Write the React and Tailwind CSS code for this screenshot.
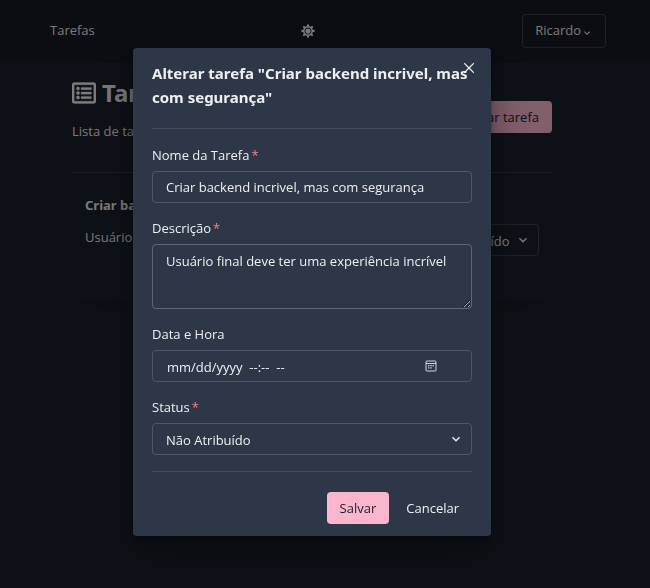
import { FaRegListAlt, FaSun } from "react-icons/fa";
import { MdKeyboardArrowDown } from "react-icons/md";

const fieldClass =
  "block h-8 w-full rounded border border-white/16 bg-transparent px-[13px] text-[13px] leading-5 text-white/92 outline-none";

function Field({ id, label, required, children }) {
  return (
    <div>
      <label htmlFor={id} className="mb-[6px] block leading-5">
        {label}
        {required && <span className="ml-[2px] text-[#fc8181]">*</span>}
      </label>
      {children}
    </div>
  );
}

function StatusSelect({ id, ...rest }) {
  return (
    <div className="relative">
      <select id={id} defaultValue="none" className={fieldClass + " appearance-none pt-[2px] pr-7"} {...rest}>
        <option value="none">Não Atribuído</option>
      </select>
      <MdKeyboardArrowDown className="pointer-events-none absolute top-2 right-2 size-4" />
    </div>
  );
}

function DateTimeInput({ id }) {
  return (
    <div className="relative">
      <input
        id={id}
        placeholder="mm/dd/yyyy  --:--  --"
        className={fieldClass + " px-[14px] pt-[2px] placeholder:text-white/92"}
      />
      <button type="button" aria-label="Abrir calendário" className="absolute top-[10px] right-[35px]">
        <svg viewBox="0 0 12 12" className="size-3 opacity-85" fill="none" stroke="currentColor">
          <rect x="1" y="1" width="10" height="10" rx="1" strokeWidth="1" />
          <path d="M1 3.5h10" strokeWidth="1" />
          <path d="M3 5.7h1.4M5.3 5.7h1.4M7.6 5.7H9M3 7.8h1.4M5.3 7.8h1.4" strokeWidth="1.3" />
        </svg>
      </button>
    </div>
  );
}

function Navbar() {
  return (
    <nav className="flex h-[63px] items-center justify-between bg-[#171923] pr-11 pb-[2px] pl-[50px]">
      <a href="#tarefas">Tarefas</a>
      <button type="button" aria-label="Alternar tema" className="p-1">
        <FaSun className="size-[14px]" />
      </button>
      <button
        type="button"
        className="flex h-[34px] items-center rounded border border-white/16 px-3"
      >
        Ricardo
        <MdKeyboardArrowDown className="mt-1 size-3" />
      </button>
    </nav>
  );
}

function TaskPage() {
  return (
    <main className="mx-auto max-w-[480px] pt-[14px]">
      <div className="flex items-center justify-between">
        <div>
          <h1 className="flex items-center gap-[6px] font-['Noto_Sans',sans-serif] text-2xl leading-8 font-bold">
            <FaRegListAlt className="size-6" stroke="currentColor" strokeWidth="6" />
            Tarefas
          </h1>
          <p className="mt-3 leading-5">Lista de tarefas</p>
        </div>
        <button
          type="button"
          className="mt-4 h-8 rounded bg-[#fbb6ce] px-[13px] pt-[2px] text-[#1a202c]"
        >
          Criar tarefa
        </button>
      </div>
      <hr className="mt-[31px] border-white/12" />
      <article className="flex justify-between rounded p-[13px] pt-[22px] pb-[46px] shadow-md">
        <div>
          <h2 className="font-['Noto_Sans',sans-serif] leading-5 font-bold">Criar backend</h2>
          <p className="mt-3 leading-5">Usuário final</p>
        </div>
        <div className="mt-[29px] w-32">
          <StatusSelect id="card-status" aria-label="Status da tarefa" />
        </div>
      </article>
    </main>
  );
}

function TaskModal() {
  return (
    <div className="fixed inset-0 flex items-start justify-center bg-black/48 pt-12 pr-[26px]">
      <section
        role="dialog"
        aria-labelledby="modal-title"
        className="relative w-[358px] rounded bg-[#2d3748] px-[19px] pt-[13px] pb-3 shadow-[0_0_0_1px_rgba(0,0,0,0.1),0_5px_10px_rgba(0,0,0,0.2),0_15px_40px_rgba(0,0,0,0.4)]"
      >
        <h2 id="modal-title" className="font-['Noto_Sans',sans-serif] text-[15px] leading-6 font-bold">
          Alterar tarefa "Criar backend incrivel, mas com segurança"
        </h2>
        <button
          type="button"
          aria-label="Fechar"
          className="absolute top-[10px] right-3 flex size-5 items-center justify-center"
        >
          <svg viewBox="0 0 24 24" className="size-[10px]" fill="currentColor">
            <path d="M.439,21.44a1.5,1.5,0,0,0,2.122,2.121L11.823,14.3a.25.25,0,0,1,.354,0l9.262,9.263a1.5,1.5,0,1,0,2.122-2.121L14.3,12.177a.25.25,0,0,1,0-.354l9.263-9.262A1.5,1.5,0,0,0,21.439.44L12.177,9.7a.25.25,0,0,1-.354,0L2.561.44A1.5,1.5,0,0,0,.439,2.561L9.7,11.823a.25.25,0,0,1,0,.354Z" />
          </svg>
        </button>
        <form>
          <hr className="mt-[19px] mb-4 border-white/12" />
          <div className="flex flex-col gap-[15px]">
            <Field id="name" label="Nome da Tarefa" required>
              <input id="name" defaultValue="Criar backend incrivel, mas com segurança" className={fieldClass} />
            </Field>
            <Field id="description" label="Descrição" required>
              <textarea
                id="description"
                defaultValue="Usuário final deve ter uma experiência incrível"
                className="block h-[65px] w-full rounded border border-white/24 bg-transparent px-[13px] py-[6px] text-[13px] leading-5 outline-none"
              />
            </Field>
            <Field id="date" label="Data e Hora">
              <DateTimeInput id="date" />
            </Field>
            <Field id="status" label="Status" required>
              <StatusSelect id="status" />
            </Field>
          </div>
          <hr className="mt-4 mb-5 border-white/12" />
          <div className="flex justify-end">
            <button type="submit" className="h-8 rounded bg-[#fbb6ce] px-[13px] pt-[2px] text-[#1a202c]">
              Salvar
            </button>
            <button type="button" className="ml-1 h-8 rounded px-[13px] pt-[2px]">
              Cancelar
            </button>
          </div>
        </form>
      </section>
    </div>
  );
}

export default function App() {
  return (
    <div className="min-h-screen bg-[#1a202c] font-['Open_Sans',sans-serif] text-[13px] text-white/92">
      <Navbar />
      <div className="pr-[26px]">
        <TaskPage />
      </div>
      <TaskModal />
    </div>
  );
}
